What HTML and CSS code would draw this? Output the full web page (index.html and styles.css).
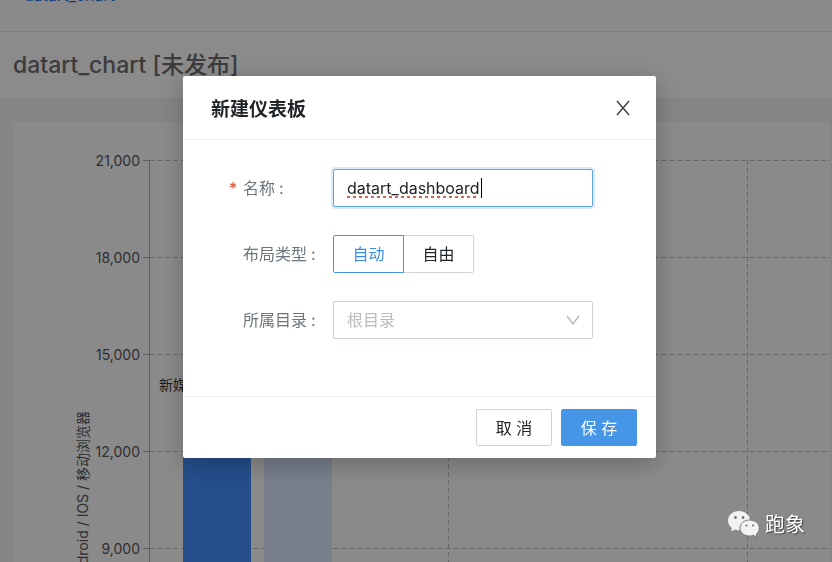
FILE: index.html
```html
<!DOCTYPE html>
<html lang="zh-CN">
<head>
    <meta charset="UTF-8">
    <meta name="viewport" content="width=device-width, initial-scale=1.0">
    <title>datart_chart</title>
    <link rel="stylesheet" href="styles.css">
</head>
<body>
<div class="page">
    <nav class="tabs">
        <a href="#" class="tab">datart_chart</a>
    </nav>
    <header class="header">
        <h1>datart_chart [未发布]</h1>
    </header>
    <main class="content">
        <div class="card">
            <svg class="chart" width="100%" height="440">
                <g class="grid">
                    <line x1="136" y1="38" x2="100%" y2="38"/>
                    <line x1="136" y1="135" x2="100%" y2="135"/>
                    <line x1="136" y1="232" x2="100%" y2="232"/>
                    <line x1="136" y1="329" x2="100%" y2="329"/>
                    <line x1="136" y1="426" x2="100%" y2="426"/>
                    <line x1="435" y1="38" x2="435" y2="440"/>
                    <line x1="734" y1="38" x2="734" y2="440"/>
                </g>
                <g class="axis">
                    <line x1="136" y1="38" x2="136" y2="440"/>
                    <line x1="130" y1="38" x2="136" y2="38"/>
                    <line x1="130" y1="135" x2="136" y2="135"/>
                    <line x1="130" y1="232" x2="136" y2="232"/>
                    <line x1="130" y1="329" x2="136" y2="329"/>
                    <line x1="130" y1="426" x2="136" y2="426"/>
                </g>
                <rect class="bar" x="170" y="290" width="68" height="150"/>
                <rect class="bar light" x="251" y="290" width="68" height="150"/>
                <g class="ticks">
                    <text x="127" y="44">21,000</text>
                    <text x="127" y="141">18,000</text>
                    <text x="127" y="238">15,000</text>
                    <text x="127" y="335">12,000</text>
                    <text x="127" y="432">9,000</text>
                </g>
                <text class="bar-label" x="146" y="268">新媒体</text>
                <text class="axis-name" transform="translate(75 289) rotate(-90)">Android / IOS / 移动浏览器</text>
            </svg>
        </div>
    </main>
</div>

<div class="mask">
    <form class="modal" role="dialog" aria-labelledby="modal-title">
        <div class="modal-header">
            <h2 id="modal-title">新建仪表板</h2>
            <button type="button" class="close" aria-label="关闭">
                <svg width="14" height="16" viewBox="0 0 14 16"><path d="M1 1L13 15M13 1L1 15"/></svg>
            </button>
        </div>
        <div class="modal-body">
            <label class="label required" for="name">名称<i>:</i></label>
            <div class="field">
                <input type="text" id="name" class="input" value="datart_dashboard" spellcheck="false">
                <span class="caret"></span>
            </div>

            <span class="label" id="layout-label">布局类型<i>:</i></span>
            <div class="radios" role="radiogroup" aria-labelledby="layout-label">
                <label class="radio"><input type="radio" name="layout" checked>自动</label>
                <label class="radio"><input type="radio" name="layout">自由</label>
            </div>

            <label class="label" for="dir">所属目录<i>:</i></label>
            <div class="field">
                <select id="dir" class="input select">
                    <option>根目录</option>
                </select>
                <svg class="arrow" width="14" height="10" viewBox="0 0 14 10"><path d="M1 1L7 9L13 1"/></svg>
            </div>
        </div>
        <div class="modal-footer">
            <button type="button" class="btn">取 消</button>
            <button type="button" class="btn primary">保 存</button>
        </div>
    </form>
</div>

<div class="watermark">
    <svg width="32" height="28" viewBox="0 0 32 28">
        <path class="bubble" d="M11 0C5 0 0 4 0 9.500C0 12.500 1.500 15 4 17L3 20.500L7 18.500C8 19 9.500 19.200 11 19.200C17 19.200 22 15 22 9.500C22 4 17 0 11 0Z"/>
        <path class="bubble front" d="M21.500 9C16 9 12 12.500 12 17C12 21.500 16 25 21.500 25C23 25 24.500 24.800 25.500 24.300L29 26.500L28.200 23.200C30.200 21.700 31.300 19.500 31.300 17C31.300 12.500 27 9 21.500 9Z"/>
        <g class="eyes">
            <circle cx="7.500" cy="6.500" r="1.400"/>
            <circle cx="15" cy="6.500" r="1.400"/>
            <circle cx="18.500" cy="14.500" r="1.100"/>
            <circle cx="25" cy="14.500" r="1.100"/>
        </g>
    </svg>
    <span>跑象</span>
</div>
</body>
</html>
```
FILE: styles.css
```css
*{
    box-sizing: border-box;
}
body{
    margin: 0;
    font-family: Inter, "Noto Sans CJK SC", sans-serif;
    font-size: 16px;
    color: #212529;
}
h1, h2{
    margin: 0;
}
button, input, select{
    font: inherit;
    color: inherit;
}

/* 背景页面 */
.page{
    height: 100vh;
    overflow: hidden;
    background: #f2f2f3;
}
.tabs{
    display: flow-root;
    height: 32px;
    background: #fbfdf9;
    border-bottom: 1px solid #e2e2e2;
}
.tab{
    display: block;
    width: 158px;
    height: 30px;
    margin-top: -16px;
    padding-left: 24px;
    line-height: 22px;
    font-size: 16px;
    color: #1b6fe0;
    text-decoration: none;
    background: #f7f9f7;
}
.header{
    height: 66px;
    padding: 0 13px;
    background: #fdfdfd;
}
.header h1{
    font-size: 23px;
    line-height: 66px;
    font-weight: 500;
    color: #6c6c6e;
}
.content{
    padding: 24px 2px 0 13px;
}
.card{
    background: #fcfcfd;
}
.chart{
    display: block;
    font-size: 14px;
    fill: #55565a;
}
.grid line{
    stroke: #bcbcbe;
    stroke-dasharray: 5 3;
    shape-rendering: crispEdges;
}
.axis line{
    stroke: #b0b0b4;
    shape-rendering: crispEdges;
}
.ticks{
    text-anchor: end;
}
.bar{
    fill: #458efb;
}
.bar.light{
    fill: #dae7fd;
}
.bar-label{
    fill: #333;
}
.axis-name{
    text-anchor: end;
}

/* 弹窗 */
.mask{
    position: fixed;
    top: 0;
    right: 0;
    bottom: 0;
    left: 0;
    padding: 76px 176px 0 183px;
    background: rgba(0, 0, 0, .45);
}
.modal{
    background: #fff;
    border-radius: 2px;
    box-shadow: 0 6px 24px rgba(0, 0, 0, .25);
}
.modal-header{
    display: flex;
    align-items: center;
    justify-content: space-between;
    height: 64px;
    padding: 0 26px 0 28px;
    border-bottom: 1px solid #eef0f2;
}
.modal-header h2{
    font-size: 19px;
    font-weight: 700;
}
.close{
    display: flex;
    padding: 0;
    border: 0;
    background: none;
}
.close path{
    fill: none;
    stroke: #444;
    stroke-width: 1.5;
}
.modal-body{
    display: grid;
    grid-template-columns: 104px 1fr;
    row-gap: 28px;
    padding: 29px 63px 57px 46px;
}
.label{
    padding-left: 14px;
    line-height: 38px;
    color: #6c757d;
}
.label i{
    margin-left: 4px;
    font-style: normal;
}
.required{
    padding-left: 0;
}
.required::before{
    content: "*";
    display: inline-block;
    width: 14px;
    color: #e2452f;
}
.field{
    position: relative;
}
.input{
    display: block;
    width: 100%;
    height: 38px;
    padding: 0 13px;
    border: 1px solid #5fa5de;
    border-radius: 2px;
    outline: none;
    background: #fff;
    box-shadow: 0 0 0 2px #dcebfb;
    text-decoration: underline dotted #e0604f 3px;
    text-decoration-skip-ink: none;
}
.caret{
    position: absolute;
    top: 9px;
    left: 148px;
    width: 1px;
    height: 20px;
    background: #000;
}
.select{
    appearance: none;
    border-color: #ced4da;
    box-shadow: none;
    color: #b9bcc0;
    text-decoration: none;
}
.arrow{
    position: absolute;
    top: 14px;
    right: 13px;
    pointer-events: none;
}
.arrow path{
    fill: none;
    stroke: #b4b7bb;
    stroke-width: 1.3;
}
.radios{
    display: flex;
}
.radio{
    width: 70px;
    height: 38px;
    line-height: 36px;
    text-align: center;
    border: 1px solid #ced4da;
    border-left: 0;
    border-radius: 0 2px 2px 0;
}
.radio:first-child{
    width: 71px;
    border-left: 1px solid #ced4da;
    border-radius: 2px 0 0 2px;
}
.radio:has(input:checked){
    color: #3c8fe8;
    border-color: #4496e4;
}
.radio input{
    display: none;
}
.modal-footer{
    display: flex;
    justify-content: flex-end;
    gap: 9px;
    padding: 12px 19px;
    border-top: 1px solid #f0f1f3;
}
.btn{
    width: 76px;
    height: 37px;
    padding: 0 0 2px;
    border: 1px solid #ced4da;
    border-radius: 2px;
    background: #fff;
}
.btn.primary{
    color: #fff;
    border-color: #4696e8;
    background: #4696e8;
}

/* 水印 */
.watermark{
    position: fixed;
    right: 27px;
    bottom: 22px;
    display: flex;
    align-items: center;
    gap: 5px;
    font-size: 20px;
    line-height: 30px;
    color: #fff;
    text-shadow: 1px 1px 1px #444;
}
.bubble{
    fill: #f2f2f3;
}
.front{
    stroke: #777;
    stroke-width: 1;
}
.eyes{
    fill: #77777a;
}
```
